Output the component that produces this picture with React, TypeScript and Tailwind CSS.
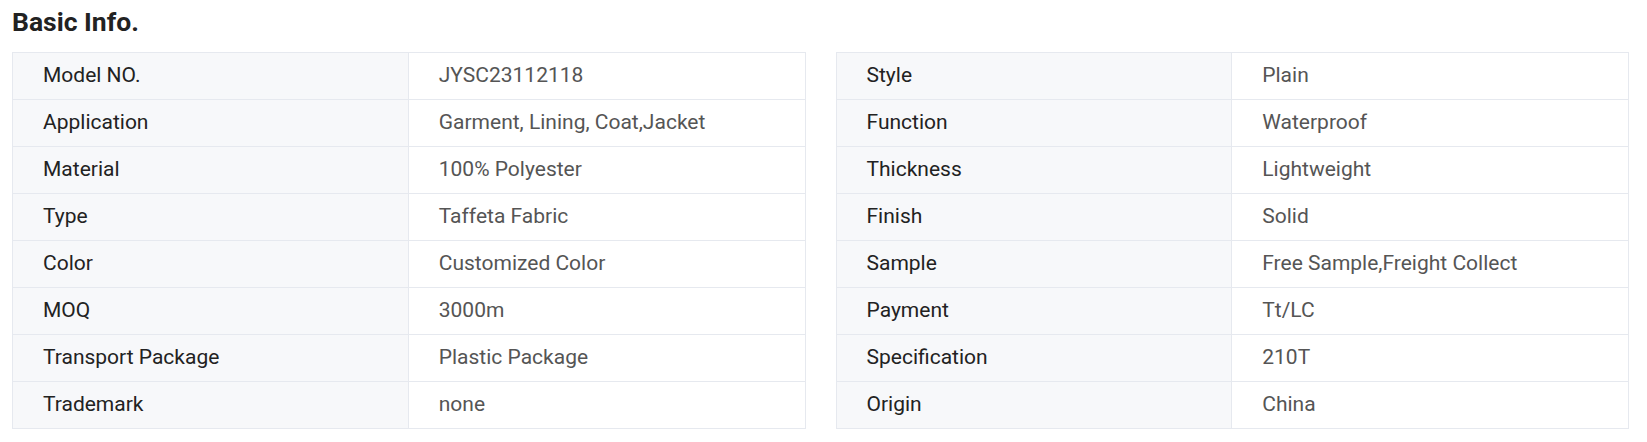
import React from "react";

const left: [string, string][] = [
  ["Model NO.", "JYSC23112118"],
  ["Application", "Garment, Lining, Coat,Jacket"],
  ["Material", "100% Polyester"],
  ["Type", "Taffeta Fabric"],
  ["Color", "Customized Color"],
  ["MOQ", "3000m"],
  ["Transport Package", "Plastic Package"],
  ["Trademark", "none"],
];

const right: [string, string][] = [
  ["Style", "Plain"],
  ["Function", "Waterproof"],
  ["Thickness", "Lightweight"],
  ["Finish", "Solid"],
  ["Sample", "Free Sample,Freight Collect"],
  ["Payment", "Tt/LC"],
  ["Specification", "210T"],
  ["Origin", "China"],
];

function Table({ rows }: { rows: [string, string][] }) {
  return (
    <div className="border-t border-l border-r border-[#e6e9ef]">
      {rows.map(([k, v]) => (
        <div key={k} className="grid grid-cols-2 h-[47px] border-b border-[#e6e9ef]">
          <div className="flex items-center bg-[#f7f8fa] border-r border-[#e6e9ef] pl-[30px] text-[#222222]">
            {k}
          </div>
          <div className="flex items-center pl-[30px] text-[#555555]">{v}</div>
        </div>
      ))}
    </div>
  );
}

export default function App() {
  return (
    <div
      className="bg-white w-[1647px] h-[442px] pl-[12px] pr-[18px] pt-[6px]"
      style={{ fontFamily: "Roboto, 'Liberation Sans', sans-serif" }}
    >
      <h2 className="text-[26.5px] leading-[1.2] font-bold text-[#222222]">Basic Info.</h2>
      <div className="grid grid-cols-2 gap-[30px] mt-[14px] text-[21px]">
        <Table rows={left} />
        <Table rows={right} />
      </div>
    </div>
  );
}
